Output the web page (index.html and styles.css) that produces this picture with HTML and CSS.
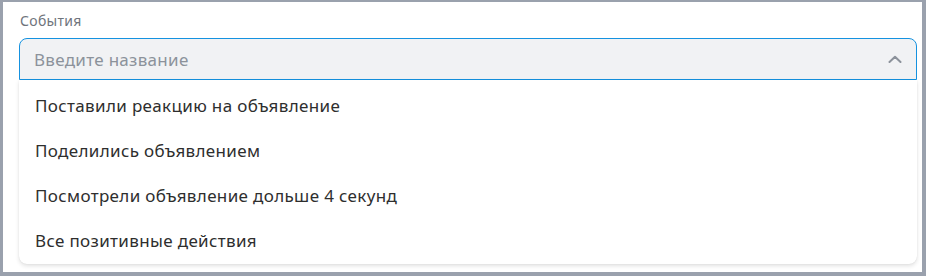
FILE: index.html
```html
<!DOCTYPE html>
<html lang="ru">
<head>
    <meta charset="UTF-8">
    <meta name="viewport" content="width=device-width, initial-scale=1.0">
    <title>События</title>
    <link rel="stylesheet" href="styles.css">
</head>
<body>
    <div class="frame">
        <div class="field">
            <label class="field-label" for="eventInput">События</label>
            <div class="select">
                <div class="select-control">
                    <input id="eventInput" class="select-input" type="text" placeholder="Введите название">
                    <svg class="chevron" width="14" height="8" viewBox="0 0 14 8">
                        <path d="M1.5 7 L7 1.8 L12.5 7" fill="none" stroke="#8c929b" stroke-width="2" stroke-linecap="round" stroke-linejoin="round"/>
                    </svg>
                </div>
                <ul class="select-menu">
                    <li>Поставили реакцию на объявление</li>
                    <li>Поделились объявлением</li>
                    <li>Посмотрели объявление дольше 4 секунд</li>
                    <li>Все позитивные действия</li>
                </ul>
            </div>
        </div>
    </div>
</body>
</html>
```

FILE: styles.css
```css
body {
    margin: 0;
    padding: 0;
    background-color: #9aa1ad;
    font-family: "Noto Sans", Arial, sans-serif;
}
.frame {
    box-sizing: border-box;
    width: 919px;
    height: 270px;
    margin: 2px 0 0 3px;
    background-color: #fff;
    padding: 9px 4px 0 16px;
}
.field-label {
    display: block;
    font-size: 14px;
    line-height: 19px;
    letter-spacing: 0.3px;
    color: #6f747c;
    margin-bottom: 8px;
    padding-left: 1px;
}
.select {
    width: 898px;
}
.select-control {
    display: flex;
    align-items: center;
    height: 40px;
    border: 1px solid #1592e0;
    border-radius: 8px 8px 0 0;
    background-color: #f1f2f4;
    padding: 0 14px 0 14px;
}
.select-input {
    flex: 1;
    border: none;
    outline: none;
    background: transparent;
    font-family: inherit;
    font-size: 17px;
    letter-spacing: 0.3px;
    color: #333;
    padding: 0;
}
.select-input::placeholder {
    color: #8c929b;
}
.chevron {
    margin-top: -1px;
}
.select-menu {
    list-style: none;
    margin: 0;
    padding: 3px 0 1px 0;
    background-color: #fff;
    border-radius: 0 0 8px 8px;
    box-shadow: 0 2px 4px rgba(0, 0, 0, 0.12), 0 0 1px rgba(0, 0, 0, 0.12);
}
.select-menu li {
    font-size: 17px;
    letter-spacing: 0.35px;
    color: #2e2e2e;
    line-height: 21px;
    padding: 12px 16px 12px 16px;
}
```
